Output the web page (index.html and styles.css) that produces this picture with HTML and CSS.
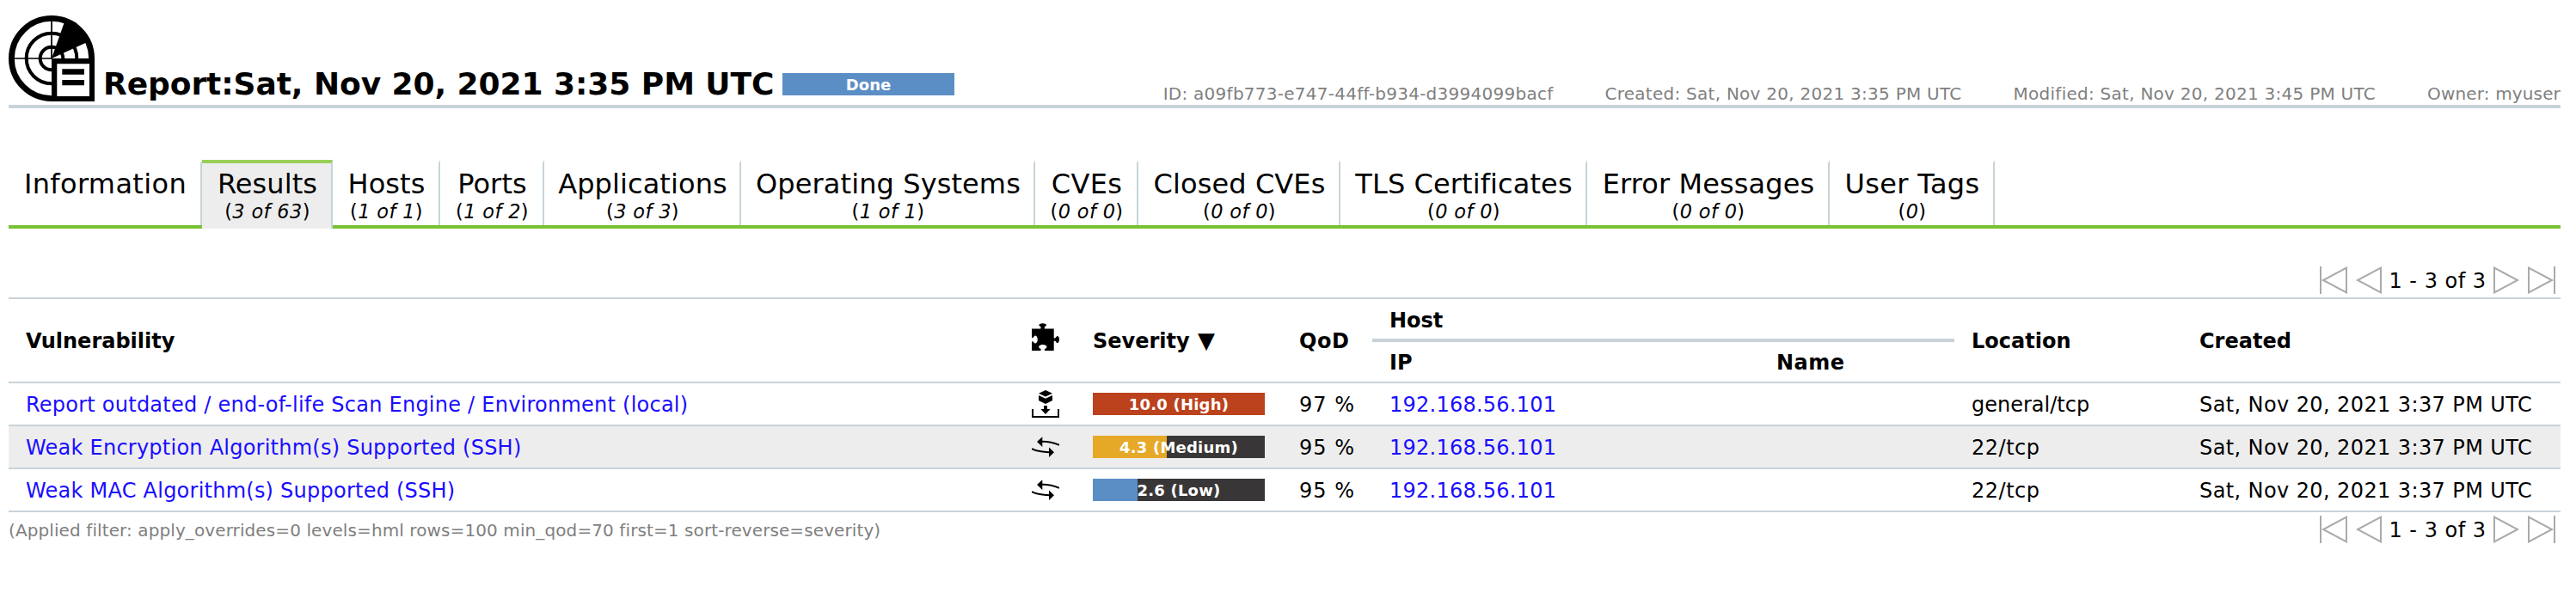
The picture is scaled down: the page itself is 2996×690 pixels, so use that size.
FILE: index.html
```
<!DOCTYPE html>
<html lang="en">
<head>
<meta charset="utf-8">
<title>Report: Sat, Nov 20, 2021 3:35 PM UTC</title>
<link rel="stylesheet" href="styles.css">
</head>
<body>
<svg class="defs" aria-hidden="true">
  <symbol id="first" viewBox="0 0 32 32"><path d="M1 0V32M31 1.6V30.4L4 16Z"/></symbol>
  <symbol id="prev" viewBox="0 0 32 32"><path d="M31 1.6V30.4L4 16Z"/></symbol>
  <symbol id="next" viewBox="0 0 32 32"><path d="M1 1.6V30.4L28 16Z"/></symbol>
  <symbol id="last" viewBox="0 0 32 32"><path d="M31 0V32M1 1.6V30.4L28 16Z"/></symbol>
  <symbol id="remote" viewBox="0 0 32 32">
    <path d="M12 9.7Q22 9.5 32 13.8M0 18.2Q8 22 20 22.2" fill="none" stroke="#000" stroke-width="2"/>
    <path d="M6 10L12.3 4.3V16ZM26 22.2L20 16.4V28Z"/>
  </symbol>
</svg>

<header class="head">
  <svg class="report-icon" viewBox="0 0 100 100">
    <g fill="none" stroke="#000">
      <circle cx="50" cy="50" r="46.6" stroke-width="6.8"/>
      <circle cx="50" cy="50" r="29.3" stroke-width="4"/>
      <circle cx="50" cy="50" r="13.3" stroke-width="4"/>
      <path d="M50 5V50M5 50H50" stroke-width="1.7"/>
    </g>
    <path d="M50 50L65.5 6L78 8L93 26L91 31.3Z"/>
    <path d="M50 50H100V100H50Z"/>
    <path d="M56.3 56.3H94V94H56.3Z" fill="#fff"/>
    <path d="M62.3 62.3H88V68.7H62.3ZM62.3 75H88V81.3H62.3Z"/>
  </svg>
  <h1 class="title">Report:Sat, Nov 20, 2021 3:35 PM UTC</h1>
  <div class="bar status">Done</div>
  <div class="info">
    <span>ID: a09fb773-e747-44ff-b934-d3994099bacf</span>
    <span>Created: Sat, Nov 20, 2021 3:35 PM UTC</span>
    <span>Modified: Sat, Nov 20, 2021 3:45 PM UTC</span>
    <span class="owner">Owner: myuser</span>
  </div>
</header>

<nav class="tabs">
  <div class="tab wide">Information</div>
  <div class="tab active">Results<small>(<i>3 of 63</i>)</small></div>
  <div class="tab">Hosts<small>(<i>1 of 1</i>)</small></div>
  <div class="tab">Ports<small>(<i>1 of 2</i>)</small></div>
  <div class="tab">Applications<small>(<i>3 of 3</i>)</small></div>
  <div class="tab">Operating Systems<small>(<i>1 of 1</i>)</small></div>
  <div class="tab wide">CVEs<small>(<i>0 of 0</i>)</small></div>
  <div class="tab">Closed CVEs<small>(<i>0 of 0</i>)</small></div>
  <div class="tab">TLS Certificates<small>(<i>0 of 0</i>)</small></div>
  <div class="tab">Error Messages<small>(<i>0 of 0</i>)</small></div>
  <div class="tab wide">User Tags<small>(<i>0</i>)</small></div>
</nav>

<div class="pager top">
  <svg><use href="#first"/></svg><svg><use href="#prev"/></svg>
  <span>1 - 3 of 3</span>
  <svg><use href="#next"/></svg><svg><use href="#last"/></svg>
</div>

<section class="table">
  <div class="row header">
    <div class="cell">Vulnerability</div>
    <div class="cell icon">
      <svg viewBox="0 0 32 32"><path d="M0 6.4H10.2Q11.4 4.6 9.4 3.6Q7.6 2.4 9 1.2Q12.6 -.9 16.4 1.2Q17.8 2.4 16 3.6Q14 4.6 15.2 6.4H25.7V17Q27 18.6 28 16.6Q29.4 14 31 15.4Q33 19 31 22.6Q29.4 24 28 21.6Q27 19.6 25.7 21.2V32H15.2Q14 30.2 16.2 29.4Q18.2 28 17 26.4Q12.7 23.8 8.6 26.4Q7.4 28 9.4 29.4Q11.6 30.2 10.2 32H0V21.4Q1.6 20.6 2.4 22.4Q4 24.4 5.6 22.8Q8 19 5.6 15.2Q4 13.8 2.4 15.8Q1.6 17.6 0 16.8Z"/></svg>
    </div>
    <div class="cell">Severity <span class="sort">▼</span></div>
    <div class="cell mid">QoD</div>
    <div class="host">
      <div class="cell group">Host</div>
      <div class="cell">IP</div>
      <div class="cell mid">Name</div>
    </div>
    <div class="cell">Location</div>
    <div class="cell">Created</div>
  </div>
  <div class="row">
    <div class="cell link">Report outdated / end-of-life Scan Engine / Environment (local)</div>
    <div class="cell icon">
      <svg viewBox="0 0 32 32"><path d="M16 0L24 3.7L16 7.6L8 3.7ZM8 6L16 9.7L24 6V12L16 16L8 12ZM14 18H18V22H21.6L16 28L10.4 22H14ZM0 22H2V30H30V22H32V32H0Z"/></svg>
    </div>
    <div class="cell sev"><div class="bar high">10.0 (High)</div></div>
    <div class="cell pct">97 %</div>
    <div class="cell link">192.168.56.101</div>
    <div class="cell"></div>
    <div class="cell">general/tcp</div>
    <div class="cell date">Sat, Nov 20, 2021 3:37 PM UTC</div>
  </div>
  <div class="row even">
    <div class="cell link">Weak Encryption Algorithm(s) Supported (SSH)</div>
    <div class="cell icon"><svg><use href="#remote"/></svg></div>
    <div class="cell sev"><div class="bar medium">4.3 (Medium)</div></div>
    <div class="cell pct">95 %</div>
    <div class="cell link">192.168.56.101</div>
    <div class="cell"></div>
    <div class="cell mid">22/tcp</div>
    <div class="cell date">Sat, Nov 20, 2021 3:37 PM UTC</div>
  </div>
  <div class="row">
    <div class="cell link">Weak MAC Algorithm(s) Supported (SSH)</div>
    <div class="cell icon"><svg><use href="#remote"/></svg></div>
    <div class="cell sev"><div class="bar low">2.6 (Low)</div></div>
    <div class="cell pct">95 %</div>
    <div class="cell link">192.168.56.101</div>
    <div class="cell"></div>
    <div class="cell mid">22/tcp</div>
    <div class="cell date">Sat, Nov 20, 2021 3:37 PM UTC</div>
  </div>
</section>

<footer class="foot">
  <div class="filter">(Applied filter: apply_overrides=0 levels=hml rows=100 min_qod=70 first=1 sort-reverse=severity)</div>
  <div class="pager">
    <svg><use href="#first"/></svg><svg><use href="#prev"/></svg>
    <span>1 - 3 of 3</span>
    <svg><use href="#next"/></svg><svg><use href="#last"/></svg>
  </div>
</footer>
</body>
</html>
```
FILE: styles.css
```
* { box-sizing: border-box; }
body {
  margin: 0;
  padding: 18px 18px 0 10px;
  background: #fff;
  color: #000;
  font: 24px/32px Verdana, "DejaVu Sans", sans-serif;
  white-space: nowrap;
}
svg { display: block; flex: none; }
.defs { display: none; }

/* Page heading */
.head {
  display: flex;
  align-items: flex-end;
  height: 108px;
  padding-bottom: 4px;
  border-bottom: 4px solid #c8d3d9;
}
.report-icon { width: 100px; height: 100px; }
.title {
  width: 800px;
  margin: 0;
  padding-left: 10px;
  font-size: 36px;
  line-height: 40px;
  letter-spacing: -.06px;
}
.bar {
  width: 200px;
  height: 26px;
  color: #fff;
  font-size: 18px;
  font-weight: bold;
  line-height: 27px;
  letter-spacing: .2px;
  text-align: center;
}
.status { margin-bottom: 7px; background: #5c8ec6; letter-spacing: 0; }
.info {
  display: flex;
  gap: 60px;
  margin-left: auto;
  color: #7f7f7f;
  font-size: 20px;
  line-height: 18px;
  letter-spacing: .26px;
}
.owner { letter-spacing: .15px; }

/* Tabs */
.tabs {
  display: grid;
  grid-template-columns: 225px 152px 125px 121px 229px 342px 120px 235px 287px 282px 192px;
  height: 80px;
  margin-top: 60px;
  border-bottom: 4px solid #79c132;
}
.tab {
  height: 76px;
  padding: 7px 0 0 2px;
  border-top: 4px solid transparent;
  border-right: 2px solid #c8d3d9;
  font-size: 32px;
  line-height: 35px;
  letter-spacing: .1px;
  text-align: center;
}
.tab.wide { letter-spacing: .35px; }
.tab.active { height: 80px; border-top-color: #99d058; background: #ededed; }
.tab small {
  display: block;
  font-size: 22.4px;
  line-height: 28px;
  letter-spacing: .4px;
}

/* Pagination */
.pager {
  display: flex;
  justify-content: flex-end;
  gap: 8px;
  height: 32px;
  padding-right: 6px;
}
.pager.top { margin: 44px 0 4px; }
.pager svg { width: 32px; height: 32px; fill: none; stroke: #aaa; stroke-width: 2; }
.pager span {
  width: 114px;
  padding-top: 1px;
  letter-spacing: .5px;
  text-align: center;
}

/* Results table */
.table { border-top: 2px solid #c8d3d9; }
.row {
  display: grid;
  grid-template-columns: 1170px 71px 240px 105px 450px 227px 265px 1fr;
  align-items: center;
  height: 50px;
  border-bottom: 2px solid #c8d3d9;
}
.even { background: #ededed; }
.cell { padding: 2px 0 0 20px; }
.header { height: 98px; font-weight: bold; }
.host {
  display: grid;
  grid-template: 50px 46px / 450px 1fr;
  grid-column: 5 / 7;
  align-items: center;
}
.group {
  grid-column: 1 / 3;
  height: 50px;
  border-bottom: 4px solid #c8d3d9;
  line-height: 46px;
}
.sort { margin-left: 1px; font-size: 26px; line-height: 24px; }
.icon, .sev { padding-top: 0; }
.icon svg { width: 32px; height: 32px; }
.header .icon { padding-bottom: 8px; }
.link { color: #1a0dff; letter-spacing: .24px; }
.mid { letter-spacing: .5px; }
.pct { letter-spacing: 1px; }
.date { letter-spacing: .4px; }
.high { background: #bb421d; }
.medium { background: linear-gradient(90deg, #e6a827 43%, #393637 43%); }
.low { background: linear-gradient(90deg, #5c8ec6 26%, #393637 26%); }

/* Below the table */
.foot { display: flex; justify-content: space-between; padding-top: 4px; }
.filter { padding-top: 1px; color: #7f7f7f; font-size: 20px; line-height: 32px; letter-spacing: .1px; }
```
